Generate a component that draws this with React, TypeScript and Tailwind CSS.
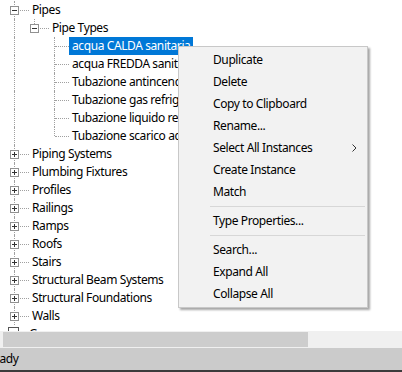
import React from "react";

type Row = {
  label: string;
  level: number;
  expander?: "plus" | "minus" | null;
  last?: boolean;
  selected?: boolean;
};

// which ancestor levels keep drawing their vertical line
const ancestorLines: Record<number, boolean> = { 0: true, 1: false };

const rows: Row[] = [
  { label: "Pipes", level: 0, expander: "minus" },
  { label: "Pipe Types", level: 1, expander: "minus", last: true },
  { label: "acqua CALDA sanitaria", level: 2, selected: true },
  { label: "acqua FREDDA sanitaria", level: 2 },
  { label: "Tubazione antincendio", level: 2 },
  { label: "Tubazione gas refrigerante", level: 2 },
  { label: "Tubazione liquido refrigerante", level: 2 },
  { label: "Tubazione scarico acque", level: 2, last: true },
  { label: "Piping Systems", level: 0, expander: "plus" },
  { label: "Plumbing Fixtures", level: 0, expander: "plus" },
  { label: "Profiles", level: 0, expander: "plus" },
  { label: "Railings", level: 0, expander: "plus" },
  { label: "Ramps", level: 0, expander: "plus" },
  { label: "Roofs", level: 0, expander: "plus" },
  { label: "Stairs", level: 0, expander: "plus" },
  { label: "Structural Beam Systems", level: 0, expander: "plus" },
  { label: "Structural Foundations", level: 0, expander: "plus" },
  { label: "Walls", level: 0, expander: "plus" },
];

const Expander = ({ kind }: { kind: "plus" | "minus" }) => (
  <div className="absolute left-[6px] top-[5px] w-[9px] h-[9px] border border-[#919191] bg-white flex items-center justify-center">
    <div className="relative w-[5px] h-[5px]">
      <div className="absolute left-0 top-[2px] w-[5px] h-px bg-[#333]" />
      {kind === "plus" && <div className="absolute left-[2px] top-0 w-px h-[5px] bg-[#333]" />}
    </div>
  </div>
);

const TreeRow = ({ row }: { row: Row }) => {
  const anc = Array.from({ length: row.level }, (_, i) => i);
  return (
    <div className="h-[18px] flex pl-[4px]">
      {anc.map((a) => (
        <div key={a} className="w-[20px] h-full relative shrink-0">
          {ancestorLines[a] && <div className="absolute left-[10px] top-0 h-full border-l border-dotted border-[#a0a0a0]" />}
        </div>
      ))}
      <div className="w-[25px] h-full relative shrink-0">
        <div
          className={`absolute left-[10px] top-0 border-l border-dotted border-[#a0a0a0] ${
            row.last ? "h-[9px]" : "h-full"
          }`}
        />
        <div className="absolute left-[11px] top-[9px] w-[14px] border-t border-dotted border-[#a0a0a0]" />
        {row.expander && <Expander kind={row.expander} />}
      </div>
      <div
        className={`h-full px-[3px] flex items-center whitespace-nowrap ${
          row.selected ? "bg-[#0078d7] text-white" : "text-black"
        }`}
      >
        {row.label}
      </div>
    </div>
  );
};

type MenuEntry = { label: string; sub?: boolean } | "sep";

const menu: MenuEntry[] = [
  { label: "Duplicate" },
  { label: "Delete" },
  { label: "Copy to Clipboard" },
  { label: "Rename..." },
  { label: "Select All Instances", sub: true },
  { label: "Create Instance" },
  { label: "Match" },
  "sep",
  { label: "Type Properties..." },
  "sep",
  { label: "Search..." },
  { label: "Expand All" },
  { label: "Collapse All" },
];

const ContextMenu = () => (
  <div className="absolute left-[178px] top-[46px] w-[190px] bg-[#f2f2f2] border border-[#c8c8c8] py-[2px] shadow-[2px_2px_2px_rgba(0,0,0,0.35)]">
    {menu.map((m, i) =>
      m === "sep" ? (
        <div key={i} className="h-[7px] flex items-center pl-[31px] pr-[2px]">
          <div className="w-full h-px bg-[#d7d7d7]" />
        </div>
      ) : (
        <div key={i} className="h-[22px] flex items-center justify-between pl-[34px] pr-[10px] text-black">
          <span>{m.label}</span>
          {m.sub && (
            <svg width="5" height="8" viewBox="0 0 5 8">
              <path d="M0.5 0.5 L4 4 L0.5 7.5" fill="none" stroke="#333" strokeWidth="1" />
            </svg>
          )}
        </div>
      )
    )}
  </div>
);

export default function App() {
  return (
    <div
      className="w-[402px] h-[372px] relative overflow-hidden bg-white text-[12px] leading-[18px] tracking-[-0.4px]"
      style={{ fontFamily: '"Noto Sans", "Open Sans", sans-serif' }}
    >
      <div className="h-[331px] overflow-hidden pt-px">
        {rows.map((r, i) => (
          <TreeRow key={i} row={r} />
        ))}
        {/* next top-level node, mostly hidden under the scrollbar */}
        <div className="h-[18px] flex items-start gap-[10px] pl-[8px] pt-[2px]">
          <div className="w-[11px] h-[11px] border border-[#555] shrink-0" />
          <span className="leading-[14px]">Groups</span>
        </div>
      </div>

      {/* horizontal scrollbar */}
      <div className="h-[17px] bg-[#f0f0f0] flex items-center pl-[3px]">
        <div className="w-[305px] h-[15px] bg-[#cdcdcd]" />
      </div>

      {/* status bar */}
      <div className="h-[22px] bg-[#cbcbcb] flex items-center overflow-hidden">
        <span className="ml-[-14px] text-black">Ready</span>
      </div>
      <div className="h-[2px] bg-[#3c3c3c]" />

      <ContextMenu />
    </div>
  );
}
